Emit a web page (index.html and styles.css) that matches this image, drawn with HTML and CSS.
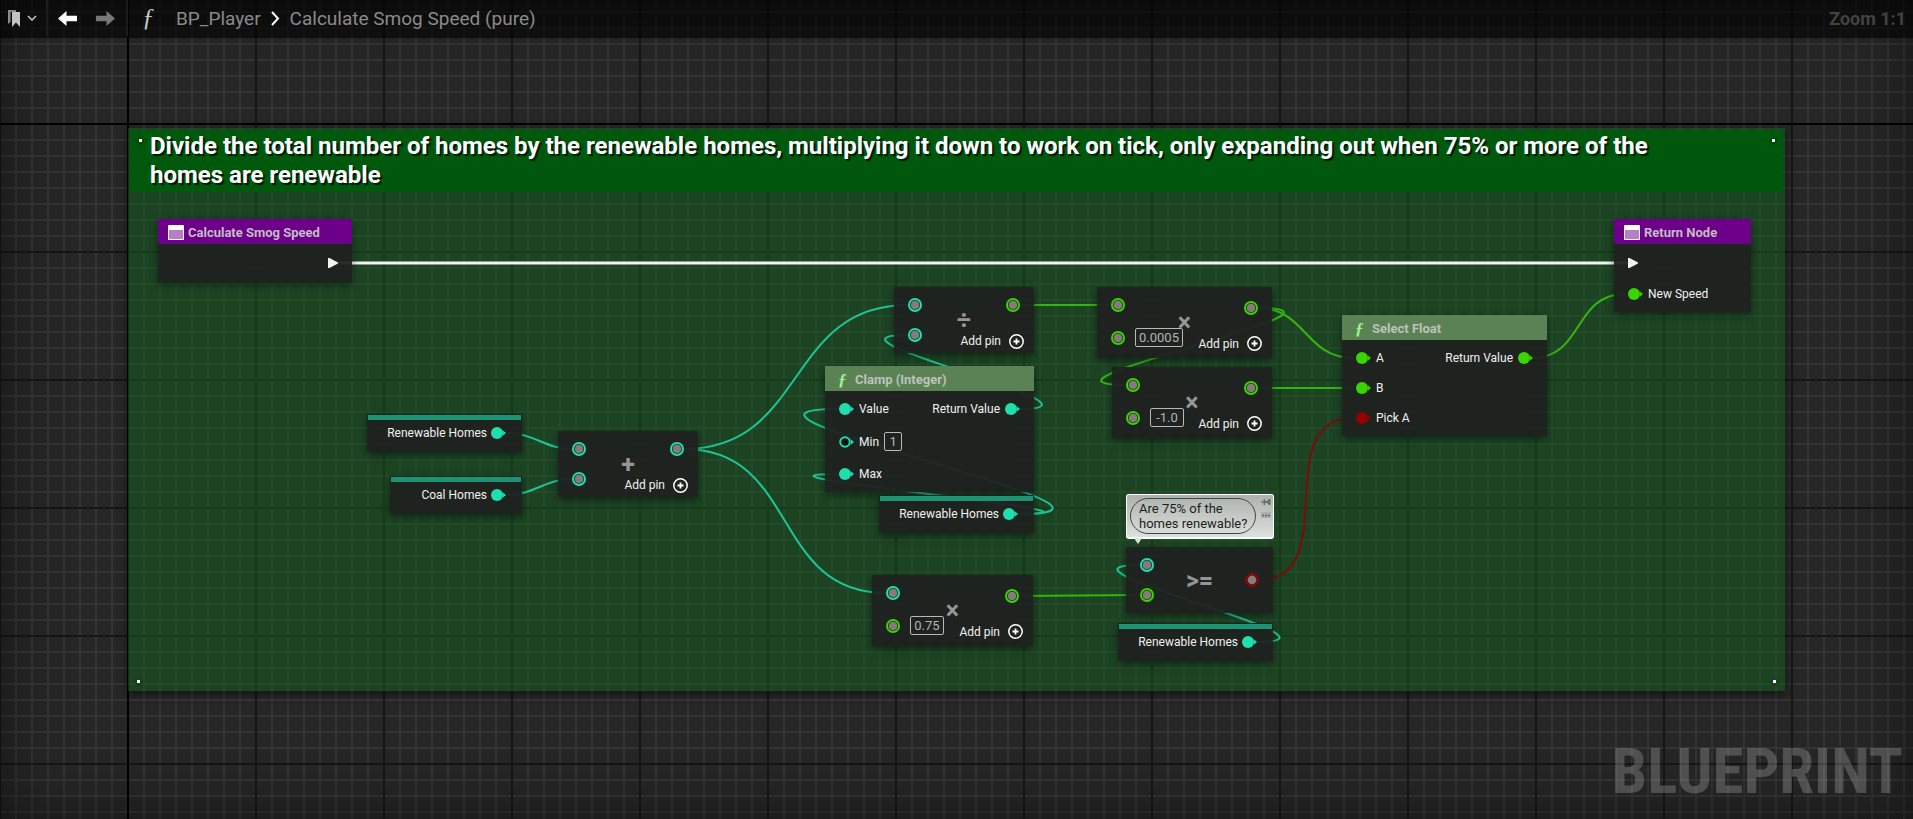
FILE: index.html
```html
<!DOCTYPE html>
<html lang="en">
<head>
    <meta charset="UTF-8">
    <meta name="viewport" content="width=device-width, initial-scale=1.0">
    <title>BP_Player - Calculate Smog Speed</title>
    <link rel="stylesheet" href="styles.css">
</head>
<body>
    <!-- shared pin and node icons -->
    <svg class="defs" aria-hidden="true">
        <symbol id="pin" viewBox="0 0 15 14">
            <circle cx="6" cy="7" r="6" fill="currentColor"/>
            <path d="M11.5 4 L15 7 L11.5 10 Q13 7 11.5 4Z" fill="currentColor"/>
        </symbol>
        <symbol id="pin-open" viewBox="0 0 15 14">
            <circle cx="6" cy="7" r="4.8" fill="#0c1412" stroke="currentColor" stroke-width="2"/>
            <path d="M11.5 4 L15 7 L11.5 10 Q13 7 11.5 4Z" fill="currentColor"/>
        </symbol>
        <symbol id="ring" viewBox="0 0 14 14">
            <circle cx="7" cy="7" r="6" fill="#151b19" stroke="currentColor" stroke-width="2"/>
            <circle cx="7" cy="7" r="4.4" fill="#857b7b"/>
        </symbol>
        <symbol id="exec" viewBox="0 0 10 10">
            <path d="M0 0 H1.5 L10 4.5 V5.5 L1.5 10 H0Z" fill="#f2f2f2"/>
        </symbol>
        <symbol id="add" viewBox="0 0 15 15">
            <circle cx="7.5" cy="7.5" r="6.7" fill="none" stroke="#fff" stroke-width="1.5"/>
            <path d="M7.5 4.5v6M4.5 7.5h6" stroke="#fff" stroke-width="1.8"/>
        </symbol>
        <symbol id="window" viewBox="0 0 16 15">
            <rect width="16" height="15" rx="1" fill="#fff"/>
            <rect x="1" y="5" width="14" height="9" fill="#b57fc4"/>
        </symbol>
    </svg>

    <main class="graph">
        <!-- comment box -->
        <section class="comment">
            <h1>Divide the total number of homes by the renewable homes, multiplying it down to work on tick, only expanding out when 75% or more of the homes are renewable</h1>
            <i class="grip tl"></i><i class="grip tr"></i><i class="grip bl"></i><i class="grip br"></i>
        </section>

        <!-- wires -->
        <svg class="wires" aria-hidden="true">
            <path class="exec" d="M338 263 H1628"/>
            <g class="int">
                <path d="M507 433 C534 433 545 449 572 449"/>
                <path d="M507 495 C534 495 545 479 572 479"/>
                <path d="M684 449 C807 449 785 305 908 305"/>
                <path d="M684 449 C799 449 771 593 886 593"/>
                <path d="M1018 409 C1132 409 795 335 909 335"/>
                <path d="M1018 514 C1188 514 669 409 839 409"/>
                <path d="M1018 514 C1152 514 705 474 839 474"/>
                <path d="M1256 642 C1370 642 1027 565 1141 565"/>
            </g>
            <g class="float">
                <path d="M1020 305 H1111"/>
                <path d="M1258 308 C1306 308 1305 358 1353 358"/>
                <path d="M1258 308 C1384 308 1001 385 1127 385"/>
                <path d="M1258 388 H1353"/>
                <path d="M1019 596 L1140 595"/>
                <path d="M1532 358 C1584 358 1573 294 1625 294"/>
            </g>
            <path class="bool" d="M1259 580 C1344 580 1268 418 1353 418"/>
        </svg>

        <!-- nodes -->
        <article class="node n-entry">
            <h2 class="event"><svg class="i-win"><use href="#window"/></svg>Calculate Smog Speed</h2>
            <div class="body">
                <div class="out"><div class="row tall"><svg class="i-exec"><use href="#exec"/></svg></div></div>
            </div>
        </article>

        <article class="node n-return">
            <h2 class="event"><svg class="i-win"><use href="#window"/></svg>Return Node</h2>
            <div class="body">
                <div class="in">
                    <div class="row tall"><svg class="i-exec"><use href="#exec"/></svg></div>
                    <div class="row"><svg class="i-pin float"><use href="#pin"/></svg>New Speed</div>
                </div>
            </div>
        </article>

        <article class="node var n-var1">Renewable Homes<svg class="i-pin int"><use href="#pin"/></svg></article>
        <article class="node var n-var2">Coal Homes<svg class="i-pin int"><use href="#pin"/></svg></article>

        <article class="node n-plus">
            <span class="symbol">+</span>
            <div class="body">
                <div class="in">
                    <div class="row"><svg class="i-ring int"><use href="#ring"/></svg></div>
                    <div class="row"><svg class="i-ring int"><use href="#ring"/></svg></div>
                </div>
                <div class="out">
                    <div class="row"><svg class="i-ring int"><use href="#ring"/></svg></div>
                    <button class="add" type="button">Add pin<svg class="i-add"><use href="#add"/></svg></button>
                </div>
            </div>
        </article>

        <article class="node n-divide">
            <span class="symbol">÷</span>
            <div class="body">
                <div class="in">
                    <div class="row"><svg class="i-ring int"><use href="#ring"/></svg></div>
                    <div class="row"><svg class="i-ring int"><use href="#ring"/></svg></div>
                </div>
                <div class="out">
                    <div class="row"><svg class="i-ring float"><use href="#ring"/></svg></div>
                    <button class="add" type="button">Add pin<svg class="i-add"><use href="#add"/></svg></button>
                </div>
            </div>
        </article>

        <article class="node n-clamp">
            <h2 class="func"><span class="fn">ƒ</span>Clamp (Integer)</h2>
            <div class="body">
                <div class="in">
                    <div class="row"><svg class="i-pin int"><use href="#pin"/></svg>Value</div>
                    <div class="row value"><svg class="i-pin int"><use href="#pin-open"/></svg><label for="min">Min</label><input class="w1" id="min" type="text" value="1"></div>
                    <div class="row"><svg class="i-pin int"><use href="#pin"/></svg>Max</div>
                </div>
                <div class="out top">
                    <div class="row">Return Value<svg class="i-pin int"><use href="#pin"/></svg></div>
                </div>
            </div>
        </article>

        <article class="node var n-var3">Renewable Homes<svg class="i-pin int"><use href="#pin"/></svg></article>

        <article class="node n-mul1">
            <span class="symbol">×</span>
            <div class="body">
                <div class="in">
                    <div class="row"><svg class="i-ring float"><use href="#ring"/></svg></div>
                    <div class="row value"><svg class="i-ring float"><use href="#ring"/></svg><input class="w4" type="text" value="0.0005" aria-label="Multiplier"></div>
                </div>
                <div class="out">
                    <div class="row"><svg class="i-ring float"><use href="#ring"/></svg></div>
                    <button class="add" type="button">Add pin<svg class="i-add"><use href="#add"/></svg></button>
                </div>
            </div>
        </article>

        <article class="node n-mul2">
            <span class="symbol">×</span>
            <div class="body">
                <div class="in">
                    <div class="row"><svg class="i-ring float"><use href="#ring"/></svg></div>
                    <div class="row value"><svg class="i-ring float"><use href="#ring"/></svg><input class="w2" type="text" value="-1.0" aria-label="Multiplier"></div>
                </div>
                <div class="out">
                    <div class="row"><svg class="i-ring float"><use href="#ring"/></svg></div>
                    <button class="add" type="button">Add pin<svg class="i-add"><use href="#add"/></svg></button>
                </div>
            </div>
        </article>

        <article class="node n-mul3">
            <span class="symbol">×</span>
            <div class="body">
                <div class="in">
                    <div class="row"><svg class="i-ring int"><use href="#ring"/></svg></div>
                    <div class="row value"><svg class="i-ring float"><use href="#ring"/></svg><input class="w2" type="text" value="0.75" aria-label="Multiplier"></div>
                </div>
                <div class="out">
                    <div class="row"><svg class="i-ring float"><use href="#ring"/></svg></div>
                    <button class="add" type="button">Add pin<svg class="i-add"><use href="#add"/></svg></button>
                </div>
            </div>
        </article>

        <article class="node n-select">
            <h2 class="func"><span class="fn">ƒ</span>Select Float</h2>
            <div class="body">
                <div class="in">
                    <div class="row"><svg class="i-pin float"><use href="#pin"/></svg>A</div>
                    <div class="row"><svg class="i-pin float"><use href="#pin"/></svg>B</div>
                    <div class="row"><svg class="i-pin bool"><use href="#pin"/></svg>Pick A</div>
                </div>
                <div class="out top">
                    <div class="row">Return Value<svg class="i-pin float"><use href="#pin"/></svg></div>
                </div>
            </div>
        </article>

        <article class="node n-gte">
            <span class="symbol">&gt;=</span>
            <div class="body">
                <div class="in">
                    <div class="row"><svg class="i-ring int"><use href="#ring"/></svg></div>
                    <div class="row"><svg class="i-ring float"><use href="#ring"/></svg></div>
                </div>
                <div class="out">
                    <div class="row"><svg class="i-ring bool"><use href="#ring"/></svg></div>
                </div>
            </div>
        </article>

        <article class="node var n-var4">Renewable Homes<svg class="i-pin int"><use href="#pin"/></svg></article>

        <!-- comment bubble -->
        <aside class="bubble">
            <p>Are 75% of the<br>homes renewable?</p>
            <div class="bubble-tools">
                <button type="button" aria-label="Pin bubble">
                    <svg width="10" height="8" viewBox="0 0 10 8"><path d="M0 4h3" stroke="#6b6f6b" stroke-width="1.2"/><path d="M2.5 1H4V3H6L8 1H9.5V7H8L6 5H4V7H2.5Z" fill="#6b6f6b"/></svg>
                </button>
                <button type="button" aria-label="Toggle bubble">
                    <svg width="10" height="8" viewBox="0 0 10 8"><rect width="10" height="8" fill="#a9b2b2"/><path d="M0 1h10" stroke="#c9d0d0"/><path d="M1 5.5h2M4 5.5h2M7 5.5h2" stroke="#5f6868" stroke-width="1.5"/></svg>
                </button>
            </div>
        </aside>

        <div class="vignette"></div>
        <div class="watermark">BLUEPRINT</div>
    </main>

    <header class="bar">
        <div class="tools">
            <button type="button" class="bookmark" aria-label="Bookmarks">
                <svg width="12" height="17" viewBox="0 0 12 17"><path d="M0 0H8V2H2.5V12L0 14Z" fill="#8c8c8c"/><path d="M4 2H12V17L8 12.5L4 17Z" fill="#c4c4c4"/></svg>
                <svg width="10" height="6" viewBox="0 0 10 6"><path d="M1 1l4 4 4-4" fill="none" stroke="#c4c4c4" stroke-width="1.5"/></svg>
            </button>
            <button type="button" class="arrow" aria-label="Back">
                <svg width="19" height="15" viewBox="0 0 19 15"><path d="M0 7.5L8.5 0V4.8H19V10.2H8.5V15Z" fill="#fff"/></svg>
            </button>
            <button type="button" class="arrow" aria-label="Forward">
                <svg width="19" height="15" viewBox="0 0 19 15"><path d="M19 7.5L10.5 0V4.8H0V10.2H10.5V15Z" fill="#777"/></svg>
            </button>
        </div>
        <nav class="crumbs">
            <span class="fn">ƒ</span>
            <a href="#">BP_Player</a>
            <svg width="9" height="15" viewBox="0 0 9 15"><path d="M1 1l6 6.5L1 14" fill="none" stroke="#fff" stroke-width="2"/></svg>
            <a href="#">Calculate Smog Speed (pure)</a>
        </nav>
        <span class="zoom">Zoom 1:1</span>
    </header>
</body>
</html>
```
FILE: styles.css
```css
* {
    box-sizing: border-box;
}

body {
    margin: 0;
    min-height: 100vh;
    background: #262626;
    color: #f0f0f0;
    font-family: Roboto, "Liberation Sans", sans-serif;
    font-size: 12px;
    overflow: hidden;
}

h1, h2, p {
    margin: 0;
}

button {
    padding: 0;
    border: 0;
    background: none;
    color: inherit;
    font: inherit;
    cursor: pointer;
}

svg {
    display: block;
    flex: none;
}

.defs {
    position: absolute;
    width: 0;
    height: 0;
}

/* pin types */
.int { color: #1fe0ac; }
.float { color: #38d500; }
.bool { color: #950000; }

/* graph canvas, 16px cells with a heavier line every 8 */
.graph {
    position: relative;
    height: 100vh;
    overflow: hidden;
    background-color: #262626;
    background-image:
        linear-gradient(#000, #000),
        linear-gradient(#000, #000),
        linear-gradient(90deg, #161616 2px, transparent 2px),
        linear-gradient(#161616 2px, transparent 2px),
        linear-gradient(90deg, #343434 2px, transparent 2px),
        linear-gradient(#343434 2px, transparent 2px);
    background-size: 2px 100%, 100% 2px, 128px 128px, 128px 128px, 16px 16px, 16px 16px;
    background-position: 127px 0, 0 123px, 127px 123px, 127px 123px, 127px 123px, 127px 123px;
    background-repeat: no-repeat, no-repeat, repeat, repeat, repeat, repeat;
}

.vignette {
    position: absolute;
    inset: 0;
    box-shadow: inset 0 0 60px rgba(0, 0, 0, 0.5);
    pointer-events: none;
}

.watermark {
    position: absolute;
    right: 10px;
    bottom: 8px;
    color: rgba(255, 255, 255, 0.2);
    font-family: "Roboto Condensed", "Liberation Sans Narrow", Roboto, sans-serif;
    font-size: 63px;
    font-weight: 700;
    line-height: 78px;
}

.wires {
    position: absolute;
    inset: 0;
    width: 100%;
    height: 100%;
    fill: none;
    stroke-width: 2;
}

.wires .int { stroke: #1fc496; }
.wires .float { stroke: #35b512; }
.wires .bool { stroke: #7d0a08; }

.wires .exec {
    stroke: #f4f4f4;
    stroke-width: 3;
}

/* top bar */
.bar {
    position: absolute;
    top: 0;
    left: 0;
    right: 0;
    display: flex;
    align-items: center;
    height: 38px;
    padding: 0 7px 2px 0;
    background: rgba(0, 0, 0, 0.6);
    color: #8a8a8a;
    font-size: 19px;
}

.tools {
    display: flex;
    align-items: center;
    height: 36px;
    width: 128px;
    border-right: 2px solid #1c1c1c;
}

.bookmark {
    display: flex;
    align-items: center;
    gap: 7px;
    width: 48px;
    height: 36px;
    padding-left: 8px;
    border-right: 2px solid #1c1c1c;
}

.arrow {
    width: 38px;
    padding-left: 10px;
}

.crumbs {
    display: flex;
    align-items: center;
    flex: 1;
    gap: 10px;
    padding-left: 14px;
}

.crumbs a {
    color: inherit;
    text-decoration: none;
}

.fn {
    font-family: "Liberation Serif", serif;
    font-style: italic;
}

.crumbs .fn {
    width: 16px;
    margin-right: 8px;
    color: #c8c8c8;
    font-size: 25px;
}

.zoom {
    color: #424242;
    font-size: 18px;
    font-weight: 700;
}

/* comment box */
.comment {
    position: absolute;
    left: 128px;
    top: 128px;
    width: 1657px;
    height: 563px;
    padding: 2px;
    background: rgba(18, 98, 32, 0.5);
    box-shadow: 0 3px 8px rgba(0, 0, 0, 0.5);
}

.comment h1 {
    padding: 2px 60px 2px 20px;
    background: #00580c;
    color: #fff;
    font-size: 24px;
    font-weight: 700;
    line-height: 29px;
    text-shadow: 2px 2px 1px rgba(0, 0, 0, 0.7);
}

.grip {
    position: absolute;
    width: 3px;
    height: 3px;
    background: #fff;
    box-shadow: 0 1px 4px #000;
}

.tl { left: 11px; top: 11px; }
.tr { right: 10px; top: 11px; }
.bl { left: 9px; bottom: 8px; }
.br { right: 9px; bottom: 8px; }

/* nodes */
.node {
    position: absolute;
    background: rgba(32, 34, 33, 0.95);
    box-shadow: 0 3px 8px rgba(0, 0, 0, 0.45);
}

.node h2 {
    display: flex;
    align-items: center;
    height: 25px;
    padding: 2px 0 0 10px;
    gap: 4px;
    color: #c3bcc6;
    font-size: 13px;
    font-weight: 700;
}

.node h2.event {
    background: #6d0088;
}

.node h2.func {
    padding-left: 13px;
    gap: 7px;
    background: #5a8255;
    color: #bcc3ba;
}

h2 .fn {
    width: 10px;
    color: #a2f08e;
    font-size: 17px;
}

.body {
    display: flex;
    justify-content: space-between;
    padding: 6px 10px 6px 14px;
}

.in, .out {
    display: flex;
    flex-direction: column;
    gap: 6px;
}

.out {
    align-items: flex-end;
    justify-content: center;
    gap: 18px;
    margin-left: auto;
}

.out.top {
    justify-content: flex-start;
}

.row {
    display: flex;
    align-items: center;
    height: 24px;
    gap: 5px;
}

.row.tall { height: 26px; }
.row.value { height: 29px; }

.out .row {
    padding-right: 4px;
}

.add {
    display: flex;
    align-items: center;
    gap: 8px;
    height: 12px;
}

.row input {
    height: 19px;
    padding: 0;
    border: 1px solid #b8b8b8;
    border-radius: 2px;
    background: transparent;
    color: #b4b4b4;
    font: inherit;
    font-size: 13px;
    text-align: center;
}

.row .i-ring + input { margin-left: 5px; }
.w1 { width: 18px; }
.w2 { width: 34px; }
.w4 { width: 48px; }

.i-win { width: 16px; height: 15px; }
.i-exec { width: 10px; height: 10px; }
.i-pin { width: 15px; height: 14px; }
.i-ring { width: 14px; height: 14px; }
.i-add { width: 15px; height: 15px; }

.symbol {
    position: absolute;
    inset: 0;
    display: flex;
    align-items: center;
    justify-content: center;
    color: #969696;
    font-size: 25px;
    font-weight: 700;
    pointer-events: none;
}

.node.var {
    display: flex;
    align-items: center;
    justify-content: flex-end;
    gap: 4px;
    height: 38px;
    padding-right: 16px;
}

.node.var::before {
    content: "";
    position: absolute;
    inset: 1px 1px auto;
    height: 5px;
    background: #1b9474;
}

.n-entry { left: 158px; top: 219px; width: 194px; }
.n-return { left: 1614px; top: 219px; width: 137px; }
.n-var1 { left: 367px; top: 414px; width: 155px; }
.n-var2 { left: 390px; top: 476px; width: 132px; }
.n-plus { left: 558px; top: 431px; width: 140px; }
.n-divide { left: 894px; top: 287px; width: 140px; }
.n-clamp { left: 825px; top: 366px; width: 209px; }
.n-var3 { left: 879px; top: 495px; width: 155px; }
.n-mul1 { left: 1097px; top: 287px; width: 175px; }
.n-mul2 { left: 1112px; top: 367px; width: 160px; }
.n-mul3 { left: 872px; top: 575px; width: 161px; }
.n-select { left: 1342px; top: 315px; width: 205px; }
.n-gte { left: 1126px; top: 547px; width: 147px; }
.n-var4 { left: 1118px; top: 623px; width: 155px; }

/* comment bubble */
.bubble {
    position: absolute;
    left: 1126px;
    top: 494px;
    display: flex;
    justify-content: space-between;
    width: 148px;
    height: 45px;
    padding: 3px 2px 3px 3px;
    border: 1px solid #fff;
    border-bottom-width: 2px;
    border-radius: 3px;
    background: linear-gradient(#abb1ac, #dde1dd);
    color: #1e1e1e;
    font-size: 13px;
}

.bubble::after {
    content: "";
    position: absolute;
    left: 7px;
    top: 43px;
    border: 4px solid transparent;
    border-top: 6px solid #dde3dd;
    border-bottom: 0;
}

.bubble p {
    padding: 2px 8px;
    border: 1px solid #444;
    border-radius: 18px;
    line-height: 15px;
    white-space: nowrap;
}

.bubble-tools {
    display: flex;
    flex-direction: column;
    gap: 4px;
}
```
